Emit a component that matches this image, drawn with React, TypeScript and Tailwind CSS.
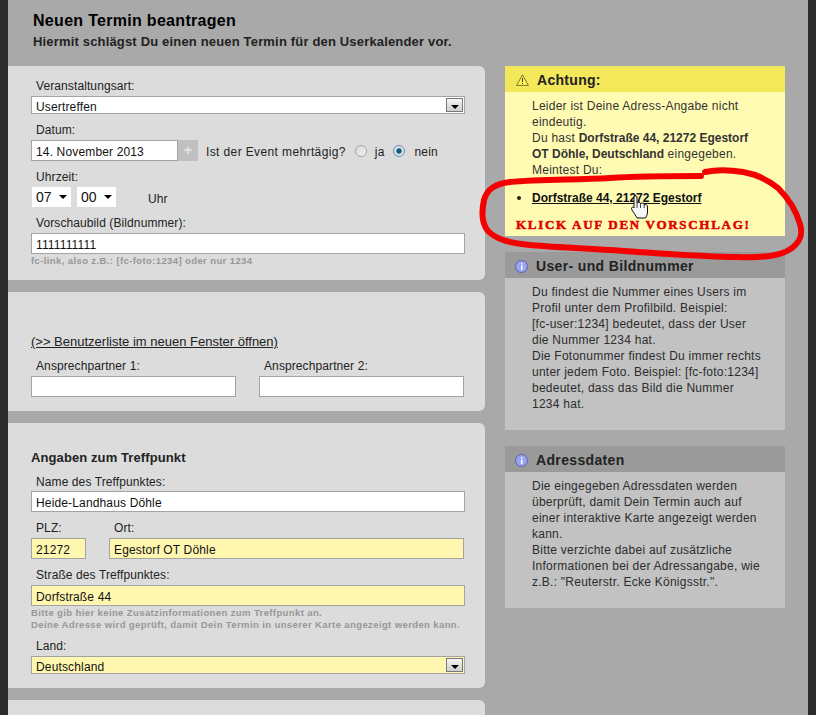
/**
 * Neuen Termin beantragen - Formular mit Hinweisspalte
 */
import type { ReactNode } from "react";

function Label({ children, className = "" }: { children: ReactNode; className?: string }) {
  return <div className={`h-[14px] pl-[5px] text-[12px] leading-[16px] text-[#222] ${className}`}>{children}</div>;
}

function Field({ value = "", yellow = false, className = "" }: { value?: string; yellow?: boolean; className?: string }) {
  return (
    <div
      className={`flex h-[21px] items-center border border-[#a3a3a3] px-[4px] pt-[3px] text-[12px] tracking-[0.15px] text-[#111] ${
        yellow ? "bg-[#fff7b0]" : "bg-white"
      } ${className}`}
    >
      {value}
    </div>
  );
}

function SelectBox({ value, yellow = false, className = "" }: { value: string; yellow?: boolean; className?: string }) {
  return (
    <div
      className={`flex items-center justify-between border border-[#a3a3a3] pl-[4px] pr-[1px] text-[12px] leading-none tracking-[0.15px] text-[#111] ${
        yellow ? "bg-[#fff7b0]" : "bg-white"
      } ${className}`}
    >
      <span className="pt-[3px]">{value}</span>
      <span className="flex h-[14px] w-[17px] items-center justify-center border border-[#777] bg-gradient-to-b from-[#f6f6f6] to-[#cfcfcf]">
        <span className="mt-[3px] h-0 w-0 border-x-[4px] border-t-[4px] border-x-transparent border-t-black" />
      </span>
    </div>
  );
}

function TimeSelect({ value }: { value: string }) {
  return (
    <div className="flex h-[20px] w-[39px] items-center justify-between bg-white pl-[4px] pr-[4px] text-[14px] tracking-normal text-[#111]">
      {value}
      <span className="h-0 w-0 border-x-[4px] border-t-[4px] border-x-transparent border-t-black" />
    </div>
  );
}

function Hint({ children }: { children: ReactNode }) {
  return <div className="text-[9.5px] font-bold leading-[12px] tracking-[0.39px] text-[#979797]">{children}</div>;
}

function InfoBox({ title, children, className = "" }: { title: string; children: ReactNode; className?: string }) {
  return (
    <section className={`bg-[#c2c2c2] ${className}`}>
      <h2 className="flex h-[26px] items-center gap-[8px] bg-[#9a9a9a] pl-[10px] pt-[2px] text-[14px] font-bold tracking-[0.35px] text-[#222]">
        <svg width="13" height="13" viewBox="0 0 13 13">
          <circle cx="6.5" cy="6.5" r="6" fill="#9aa4ee" stroke="#5a62a8" />
          <rect x="6" y="5.5" width="1.5" height="4.5" fill="#fff" />
          <rect x="6" y="3" width="1.5" height="1.5" fill="#fff" />
        </svg>
        {title}
      </h2>
      <div className="pl-[27px] pt-[6px] text-[12px] leading-[16px] tracking-[0.25px] text-[#2c2c2c]">{children}</div>
    </section>
  );
}

function Radio({ checked = false }: { checked?: boolean }) {
  return (
    <span
      className={`block h-[12px] w-[12px] rounded-full border ${
        checked
          ? "border-[#6f8ea6] bg-[radial-gradient(circle,#17577f_0,#17577f_30%,#cfe0ec_45%,#e8eff5_100%)]"
          : "border-[#a5a5a5] bg-gradient-to-br from-[#d8d8d8] to-[#f5f5f5]"
      }`}
    />
  );
}

export default function App() {
  return (
    <div className="relative h-[715px] w-[816px] overflow-hidden border-x-[8px] border-[#2b2b2b] bg-[#a9a9a9] font-['Liberation_Sans',Arial,sans-serif] tracking-[0.1px]">
      <header className="h-[66px] pl-[25px] pt-[11px]">
        <h1 className="text-[16px] font-bold leading-[20px] tracking-[0.3px] text-black">Neuen Termin beantragen</h1>
        <p className="mt-[4px] text-[13px] font-bold leading-[14px] tracking-[0.17px] text-[#222]">
          Hiermit schlägst Du einen neuen Termin für den Userkalender vor.
        </p>
      </header>

      <div className="flex items-start">
        {/* Formular */}
        <div className="flex w-[477px] flex-col gap-[12px]">
          <section className="h-[214px] rounded-r-[6px] bg-[#dcdcdc] pl-[23px] pr-[20px] pt-[12px]">
            <Label>Veranstaltungsart:</Label>
            <SelectBox value="Usertreffen" className="mt-[4px] h-[18px]" />
            <Label className="mt-[8px]">Datum:</Label>
            <div className="mt-[4px] flex h-[21px] items-center text-[12px] text-[#222]">
              <Field value="14. November 2013" className="w-[147px]" />
              <span className="flex h-[21px] w-[20px] items-center justify-center bg-[#c0c0c0] text-[14px] font-bold text-[#e4e4e4]">+</span>
              <span className="ml-[8px] pt-[3px] tracking-[0.38px]">Ist der Event mehrtägig?</span>
              <span className="ml-[9px]"><Radio /></span>
              <span className="ml-[8px] pt-[3px]">ja</span>
              <span className="ml-[9px]"><Radio checked /></span>
              <span className="ml-[9px] pt-[3px] tracking-[0.2px]">nein</span>
            </div>
            <Label className="mt-[8px]">Uhrzeit:</Label>
            <div className="mt-[4px] flex h-[20px] pl-[1px]">
              <TimeSelect value="07" />
              <span className="ml-[6px]"><TimeSelect value="00" /></span>
              <span className="ml-[32px] pt-[5px] text-[12px] leading-[14px] text-[#222]">Uhr</span>
            </div>
            <Label className="mt-[8px]">Vorschaubild (Bildnummer):</Label>
            <Field value="1111111111" className="mt-[4px]" />
            <div className="mt-[1px]"><Hint>fc-link, also z.B.: [fc-foto:1234] oder nur 1234</Hint></div>
          </section>

          <section className="h-[119px] rounded-r-[6px] bg-[#dcdcdc] pl-[23px] pr-[21px] pt-[43px]">
            <a className="block h-[14px] text-[13px] leading-[14px] tracking-normal text-[#222] underline">(&gt;&gt; Benutzerliste im neuen Fenster öffnen)</a>
            <div className="mt-[9px] flex gap-[23px]">
              <div className="w-[205px]">
                <Label>Ansprechpartner 1:</Label>
                <Field className="mt-[4px]" />
              </div>
              <div className="w-[205px]">
                <Label>Ansprechpartner 2:</Label>
                <Field className="mt-[4px]" />
              </div>
            </div>
          </section>

          <section className="h-[265px] rounded-r-[6px] bg-[#dcdcdc] pl-[23px] pr-[20px] pt-[26px]">
            <h3 className="h-[16px] pt-[1px] text-[13px] font-bold leading-[16px] text-[#222]">Angaben zum Treffpunkt</h3>
            <Label className="mt-[9px]">Name des Treffpunktes:</Label>
            <Field value="Heide-Landhaus Döhle" className="mt-[3px]" />
            <div className="mt-[8px] flex gap-[23px]">
              <div className="w-[55px]">
                <Label>PLZ:</Label>
                <Field value="21272" yellow className="mt-[4px]" />
              </div>
              <div className="w-[355px]">
                <Label>Ort:</Label>
                <Field value="Egestorf OT Döhle" yellow className="mt-[4px]" />
              </div>
            </div>
            <Label className="mt-[8px]">Straße des Treffpunktes:</Label>
            <Field value="Dorfstraße 44" yellow className="mt-[4px]" />
            <div className="mt-[1px]">
              <Hint>
                Bitte gib hier keine Zusatzinformationen zum Treffpunkt an.
                <br />
                Deine Adresse wird geprüft, damit Dein Termin in unserer Karte angezeigt werden kann.
              </Hint>
            </div>
            <Label className="mt-[7px]">Land:</Label>
            <SelectBox value="Deutschland" yellow className="mt-[4px] h-[18px]" />
          </section>

          <section className="h-[40px] rounded-tr-[6px] bg-[#dcdcdc]" />
        </div>

        {/* Hinweise */}
        <aside className="ml-[20px] w-[280px]">
          <section className="h-[170px] bg-[#fffbb3]">
            <h2 className="flex h-[26px] items-center gap-[8px] bg-[#f3e75a] pl-[11px] pt-[2px] text-[14px] font-bold tracking-[0.3px] text-[#222]">
              <svg width="13" height="12" viewBox="0 0 13 12">
                <path d="M6.5 0.8 L12.4 11.4 H0.6 Z" fill="#fff45c" stroke="#6e6a20" strokeWidth="0.9" strokeLinejoin="round" />
                <rect x="6" y="4" width="1" height="4" fill="#333" />
                <rect x="6" y="9" width="1" height="1" fill="#333" />
              </svg>
              Achtung:
            </h2>
            <div className="pl-[27px] pt-[6px] text-[12px] leading-[16px] tracking-[0.25px] text-[#333]">
              Leider ist Deine Adress-Angabe nicht
              <br />
              eindeutig.
              <br />
              Du hast <b className="tracking-normal">Dorfstraße 44, 21272 Egestorf</b>
              <br />
              <b className="tracking-normal">OT Döhle, Deutschland</b> eingegeben.
              <br />
              Meintest Du:
            </div>
            <div className="mt-[12px] flex items-center pl-[12px] text-[12px] leading-[16px] tracking-normal">
              <span className="h-[4px] w-[4px] rounded-full bg-[#222]" />
              <a className="ml-[11px] font-bold text-[#111] underline">Dorfstraße 44, 21272 Egestorf</a>
            </div>
            <div className="mt-[11px] whitespace-nowrap pl-[11px] font-['Liberation_Serif',serif] text-[13px] font-bold leading-[16px] tracking-[1.7px] text-[#e00000] [-webkit-text-stroke:0.5px_#e00000]">
              KLICK AUF DEN VORSCHLAG!
            </div>
          </section>

          <InfoBox title="User- und Bildnummer" className="mt-[16px] h-[178px]">
            Du findest die Nummer eines Users im
            <br />
            Profil unter dem Profilbild. Beispiel:
            <br />
            [fc-user:1234] bedeutet, dass der User
            <br />
            die Nummer 1234 hat.
            <br />
            Die Fotonummer findest Du immer rechts
            <br />
            unter jedem Foto. Beispiel: [fc-foto:1234]
            <br />
            bedeutet, dass das Bild die Nummer
            <br />
            1234 hat.
          </InfoBox>

          <InfoBox title="Adressdaten" className="mt-[16px] h-[162px]">
            Die eingegeben Adressdaten werden
            <br />
            überprüft, damit Dein Termin auch auf
            <br />
            einer interaktive Karte angezeigt werden
            <br />
            kann.
            <br />
            Bitte verzichte dabei auf zusätzliche
            <br />
            Informationen bei der Adressangabe, wie
            <br />
            z.B.: "Reuterstr. Ecke Königsstr.".
          </InfoBox>
        </aside>
      </div>

      {/* rote Markierung, von Hand ueber den Screenshot gemalt */}
      <svg className="pointer-events-none absolute left-[-8px] top-0" width="816" height="715" viewBox="0 0 816 715" fill="none">
        <path
          d="M701 176 C670 176 640 176 610 178 C575 180 540 179 510 182 C495 184 487 189 484 200 C481 214 482 224 488 231 C497 240 510 243 530 245 C565 248 600 249 637 252 C670 254 705 257 737 257 C760 258 782 256 792 248 C801 241 803 234 800 224 C796 210 790 200 778 188 C768 180 755 174 743 172 C730 170 715 170 705 172"
          stroke="#f40000"
          strokeWidth="6"
          strokeLinecap="round"
          strokeLinejoin="round"
        />
        <g transform="translate(631 195)">
          <path
            d="M3 2 C3 0.5 6 0.5 6 2 V8 C7 7 9 7 9.5 8.5 C11 7.5 13 8 13.2 9.5 C15 9 16.5 10 16.5 12 V17 C16.5 20 15 22 14.5 23 H6 C5 21 3 18 1 15 C-0.5 13 1.5 11 3 13 Z"
            fill="#f7f7f7"
            stroke="#111"
            strokeWidth="1"
            strokeLinejoin="round"
          />
          <path d="M6 8 V13 M9.5 8.5 V13 M13.2 9.5 V13" stroke="#111" strokeWidth="0.8" />
        </g>
      </svg>
    </div>
  );
}
